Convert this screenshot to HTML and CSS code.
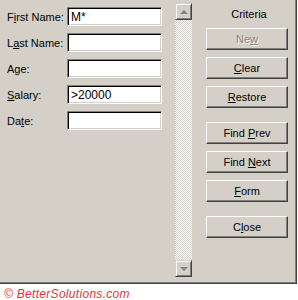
FILE: index.html
```html
<!doctype html>
<html lang="en">

<head>
	<meta charset="UTF-8">
	<title>Data Form - Criteria</title>
	<link rel="stylesheet" href="styles.css">
</head>

<body>
	<div class="dialog">
		<ul class="fields">
			<li><label>F<u>i</u>rst Name:</label><span class="box">M*</span></li>
			<li><label>L<u>a</u>st Name:</label><span class="box"></span></li>
			<li><label>A<u>g</u>e:</label><span class="box"></span></li>
			<li><label><u>S</u>alary:</label><span class="box">&gt;20000</span></li>
			<li><label>Da<u>t</u>e:</label><span class="box"></span></li>
		</ul>
		<div class="scrollbar">
			<span class="arrow up"></span>
			<span class="track"></span>
			<span class="arrow down"></span>
		</div>
		<div class="buttons">
			<div class="caption">Criteria</div>
			<button class="btn disabled">Ne<u>w</u></button>
			<button class="btn"><u>C</u>lear</button>
			<button class="btn"><u>R</u>estore</button>
			<button class="btn spaced">Find <u>P</u>rev</button>
			<button class="btn">Find <u>N</u>ext</button>
			<button class="btn"><u>F</u>orm</button>
			<button class="btn spaced">C<u>l</u>ose</button>
		</div>
	</div>
	<div class="credit">&copy; BetterSolutions.com</div>
</body>

</html>
```

FILE: styles.css
```css
html,
body {
	margin: 0;
	padding: 0;
	width: 298px;
	height: 300px;
	background: #fff;
	font-family: "Liberation Sans", Arial, sans-serif;
	font-size: 11px;
	color: #000;
}

u {
	text-decoration: underline;
	text-underline-offset: 1px;
}

.dialog {
	display: flex;
	height: 283px;
	width: 296px;
	background: #d4d0c8;
	border-right: 1px solid #404040;
	border-bottom: 1px solid #404040;
	box-shadow: inset -1px -1px 0 #808080;
}

.fields {
	margin: 0;
	padding: 7px 0 0 7px;
	list-style-type: none;
	display: flex;
	flex-direction: column;
	gap: 7px;
}

.fields li {
	display: flex;
	align-items: center;
	height: 19px;
}

.fields label {
	width: 60px;
}

.box {
	box-sizing: border-box;
	width: 95px;
	height: 19px;
	padding: 2px 0 0 3px;
	background: #fff;
	border-top: 1px solid #808080;
	border-left: 1px solid #808080;
	border-right: 1px solid #fff;
	border-bottom: 1px solid #fff;
	box-shadow: inset 1px 1px 0 #000, inset -1px -1px 0 #d4d0c8;
	font-size: 12px;
	line-height: 14px;
}

.scrollbar {
	display: flex;
	flex-direction: column;
	width: 17px;
	margin: 3px 0 0 13px;
	height: 274px;
}

.track {
	flex: 1;
	background-color: #fff;
	background-image: repeating-conic-gradient(#d4d0c8 0 25%, #fff 0 50%);
	background-size: 2px 2px;
}

.arrow {
	box-sizing: border-box;
	height: 17px;
	background: #d4d0c8;
	border-top: 1px solid #d4d0c8;
	border-left: 1px solid #d4d0c8;
	border-right: 1px solid #404040;
	border-bottom: 1px solid #404040;
	box-shadow: inset 1px 1px 0 #fff, inset -1px -1px 0 #808080;
	display: flex;
	align-items: center;
	justify-content: center;
}

.arrow::after {
	content: "";
	width: 0;
	height: 0;
	border-left: 4px solid transparent;
	border-right: 4px solid transparent;
}

.up::after {
	border-bottom: 4px solid #808080;
}

.down::after {
	border-top: 4px solid #808080;
}

.buttons {
	display: flex;
	flex-direction: column;
	margin-left: 14px;
	width: 82px;
	padding-top: 7px;
}

.caption {
	height: 14px;
	line-height: 14px;
	text-align: center;
	margin: 0 0 7px 4px;
}

.btn {
	box-sizing: border-box;
	height: 22px;
	margin-bottom: 7px;
	padding: 0;
	font-family: inherit;
	font-size: 11px;
	color: #000;
	background: #d4d0c8;
	border-top: 1px solid #fff;
	border-left: 1px solid #fff;
	border-right: 1px solid #404040;
	border-bottom: 1px solid #404040;
	box-shadow: inset -1px -1px 0 #808080;
}

.btn.spaced {
	margin-top: 7px;
}

.btn.disabled {
	color: #808080;
	text-shadow: 1px 1px 0 #fff;
}

.credit {
	padding: 3px 0 0 4px;
	color: #e8323a;
	font-style: italic;
	font-size: 12px;
	letter-spacing: 0.3px;
}
```
